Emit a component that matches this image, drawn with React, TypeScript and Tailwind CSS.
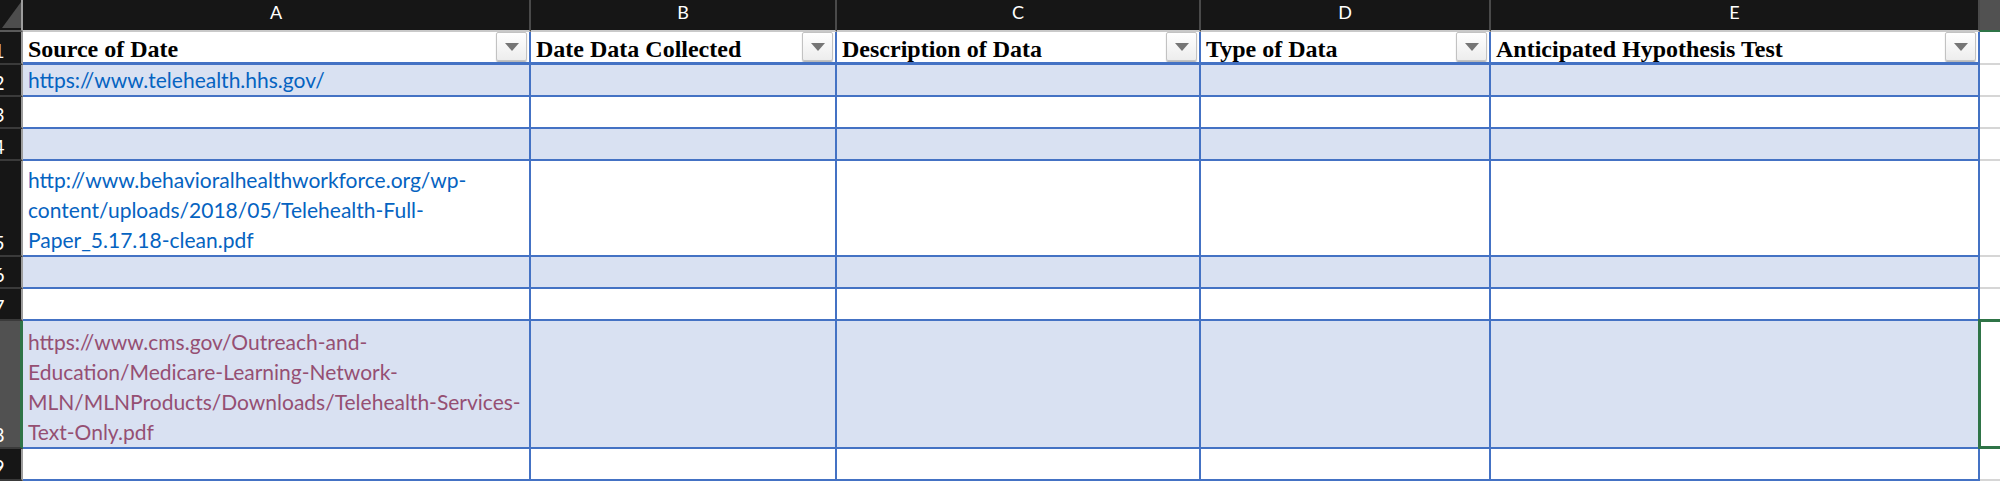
import React from "react";

const GRID = "grid grid-cols-[23px_508px_306px_364px_290px_489px_1fr]";

type RowDef = {
  n: number;
  h: string;
  band: boolean;
  lines?: string[];
  color?: string;
  selected?: boolean;
};

const rows: RowDef[] = [
  { n: 2, h: "h-[32px]", band: true, lines: ["https://www.telehealth.hhs.gov/"], color: "text-[#0563C1]" },
  { n: 3, h: "h-[32px]", band: false },
  { n: 4, h: "h-[32px]", band: true },
  {
    n: 5,
    h: "h-[96px]",
    band: false,
    lines: [
      "http://www.behavioralhealthworkforce.org/wp-",
      "content/uploads/2018/05/Telehealth-Full-",
      "Paper_5.17.18-clean.pdf",
    ],
    color: "text-[#0563C1]",
  },
  { n: 6, h: "h-[32px]", band: true },
  { n: 7, h: "h-[32px]", band: false },
  {
    n: 8,
    h: "h-[128px]",
    band: true,
    lines: [
      "https://www.cms.gov/Outreach-and-",
      "Education/Medicare-Learning-Network-",
      "MLN/MLNProducts/Downloads/Telehealth-Services-",
      "Text-Only.pdf",
    ],
    color: "text-[#954F72]",
    selected: true,
  },
  { n: 9, h: "h-[32px]", band: false },
];

const headers = [
  "Source of Date",
  "Date Data Collected",
  "Description of Data",
  "Type of Data",
  "Anticipated Hypothesis Test",
];

function FilterButton() {
  return (
    <div className="shrink-0 mr-[2px] mb-[1px] w-[31px] h-[29px] rounded-[2px] border border-[#c2c2c2] bg-linear-to-b from-white to-[#ededed] shadow-[0_1px_1px_rgba(0,0,0,0.3)] flex items-center justify-center">
      <div className="w-0 h-0 border-l-[7px] border-r-[7px] border-t-[8px] border-l-transparent border-r-transparent border-t-[#767676]" />
    </div>
  );
}

function RowNum({ n, selected, h }: { n: number; selected?: boolean; h: string }) {
  return (
    <div
      className={`${h} overflow-hidden flex items-end border-b-2 border-b-[#3a3a3a] ${
        selected ? "bg-[#515151] border-r-[3px] border-r-[#2f7447]" : "bg-[#161616] border-r-2 border-r-[#9d9d9d]"
      }`}
    >
      <span className="-ml-[7px] text-white text-[20px] leading-[26px] font-['Lato',sans-serif]">{n}</span>
    </div>
  );
}

export default function App() {
  const letters = ["A", "B", "C", "D", "E"];
  return (
    <div className="w-[2000px] h-[482px] overflow-hidden bg-white">
      {/* column header bar */}
      <div className={`${GRID} h-[32px]`}>
        <div className="bg-[#161616] border-r-2 border-r-[#9d9d9d] border-b-2 border-b-[#5a5a5a] overflow-hidden flex items-end justify-end">
          <div className="w-0 h-0 mb-[2px] border-l-[19px] border-t-[26px] border-l-transparent border-t-transparent border-b-0 border-r-0 relative">
            <div className="absolute right-0 bottom-0 w-0 h-0 border-l-[19px] border-b-[26px] border-l-transparent border-b-[#4d4d4d]" />
          </div>
        </div>
        {letters.map((l) => (
          <div
            key={l}
            className="bg-[#161616] border-r-2 border-r-[#4a4a4a] border-b-2 border-b-[#c9c9c9] flex justify-center"
          >
            <span className="text-white text-[18px] leading-[18px] mt-[3px] font-['Lato',sans-serif]">{l}</span>
          </div>
        ))}
        <div className="bg-[#515151] border-b-2 border-b-[#2f7447]" />
      </div>

      {/* row 1: table headers */}
      <div className={`${GRID} h-[33px]`}>
        <RowNum n={1} h="h-[33px]" />
        {headers.map((t) => (
          <div
            key={t}
            className="bg-white border-r-2 border-b-[3px] border-[#4472C4] flex items-end justify-between pl-[5px] overflow-hidden"
          >
            <span className="text-black text-[24px] leading-[26px] font-bold whitespace-nowrap font-['Liberation_Serif',serif]">
              {t}
            </span>
            <FilterButton />
          </div>
        ))}
        <div className="bg-white border-b-2 border-[#d6d6d6]" />
      </div>

      {rows.map((r) => (
        <div key={r.n} className={`${GRID} ${r.h}`}>
          <RowNum n={r.n} selected={r.selected} h={r.h} />
          {[0, 1, 2, 3, 4].map((c) => (
            <div
              key={c}
              className={`${r.band ? "bg-[#D9E1F2]" : "bg-white"} border-r-2 border-b-2 border-[#4472C4] flex flex-col justify-end pl-[5px] overflow-hidden`}
            >
              {c === 0 && r.lines
                ? r.lines.map((ln) => (
                    <div
                      key={ln}
                      className={`${r.color} whitespace-nowrap text-[21px] leading-[30px] font-['Lato',sans-serif]`}
                    >
                      {ln}
                    </div>
                  ))
                : null}
            </div>
          ))}
          <div className="bg-white border-b-2 border-[#d6d6d6] relative">
            {r.selected ? (
              <div className="absolute -top-[2px] -left-[2px] -bottom-[2px] right-0 border-[3px] border-r-0 border-[#2f7447]" />
            ) : null}
          </div>
        </div>
      ))}
    </div>
  );
}
